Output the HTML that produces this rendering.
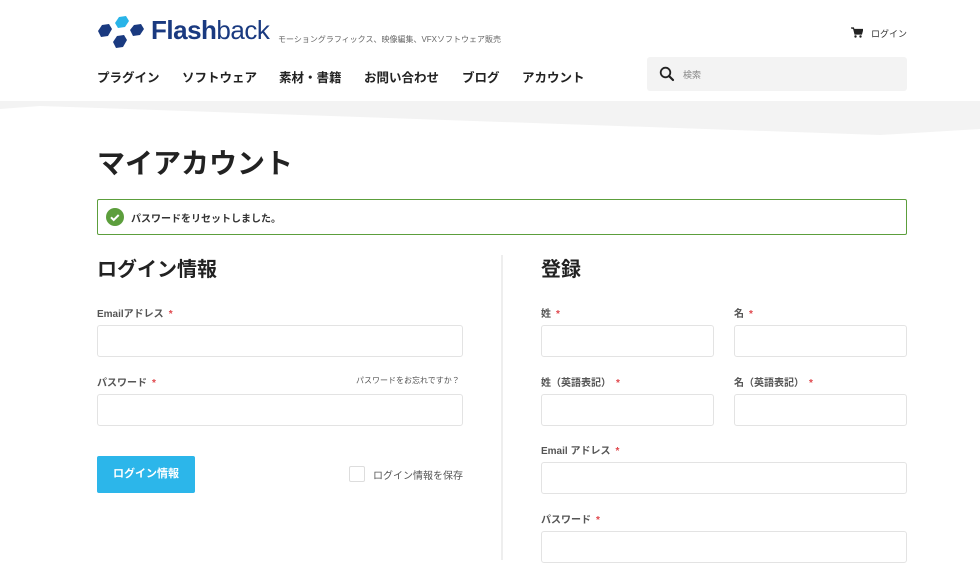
<!DOCTYPE html>
<html><head><meta charset="utf-8"><style>
*{box-sizing:border-box;margin:0;padding:0}
body{width:980px;height:560px;overflow:hidden;background:#fff;font-family:"Liberation Sans","Noto Sans CJK JP",sans-serif;color:#222;position:relative}
.a{position:absolute;white-space:nowrap}
.nav{top:67px;font-size:12.5px;font-weight:bold;color:#222}
.lbl{font-size:10px;font-weight:bold;color:#555}
.lbl i{color:#e0474c;font-style:normal;margin-left:5px}
.in{position:absolute;border:1px solid #e3e3e3;border-radius:3px;background:#fff;height:32px}
h2{position:absolute;font-size:20px;font-weight:bold;color:#222}
</style></head><body>
<svg class="a" style="left:96px;top:14px" width="50" height="36" viewBox="0 0 50 36">
<g fill="#1a3a80">
<polygon points="2,17 6,11 13,10 16,15 12,22 5,23"/>
<polygon points="34,16 38,11 45,10 48,15 44,21 37,22"/>
<polygon points="17,28 21,22 28,21 31,26 27,33 20,34"/>
</g>
<polygon fill="#29b4e8" points="19,9 23,3 30,2 33,7 29,13 22,14"/>
</svg>
<div class="a" style="left:151px;top:15px;font-size:26px;color:#1a3a80;letter-spacing:-0.5px"><b>Flash</b>back</div>
<div class="a" style="left:278px;top:34px;font-size:8px;color:#666">モーショングラフィックス、映像編集、VFXソフトウェア販売</div>
<svg class="a" style="left:851px;top:27px" width="12" height="11" viewBox="0 0 12 11"><path d="M0 1h2.5l1.5 6h6.5l1.2-4.5H3" fill="#222" stroke="#222" stroke-width="1.2"/><circle cx="4.5" cy="9.5" r="1.2" fill="#222"/><circle cx="9.5" cy="9.5" r="1.2" fill="#222"/></svg>
<div class="a" style="left:871px;top:27px;font-size:9px;color:#333">ログイン</div>
<div class="a nav" style="left:97px">プラグイン</div>
<div class="a nav" style="left:182px">ソフトウェア</div>
<div class="a nav" style="left:279px">素材・書籍</div>
<div class="a nav" style="left:364px">お問い合わせ</div>
<div class="a nav" style="left:462px">ブログ</div>
<div class="a nav" style="left:522px">アカウント</div>
<div class="a" style="left:647px;top:57px;width:260px;height:34px;background:#f3f3f3;border-radius:3px"></div>
<svg class="a" style="left:659px;top:66px" width="16" height="16" viewBox="0 0 16 16"><circle cx="6.5" cy="6.5" r="4.8" fill="none" stroke="#222" stroke-width="1.8"/><line x1="10" y1="10" x2="14" y2="14" stroke="#222" stroke-width="2.2" stroke-linecap="round"/></svg>
<div class="a" style="left:683px;top:68px;font-size:9px;color:#888">検索</div>
<svg class="a" style="left:0;top:100px" width="980" height="40" viewBox="0 0 980 40"><polygon fill="#f3f3f3" points="0,1 980,1 980,29 880,35 40,6 0,9"/></svg>
<div class="a" style="left:97px;top:142px;font-size:28px;font-weight:bold;color:#222">マイアカウント</div>
<div class="a" style="left:97px;top:199px;width:810px;height:36px;border:1px solid #5c9e3c;border-radius:2px"></div>
<svg class="a" style="left:106px;top:208px" width="18" height="18" viewBox="0 0 18 18"><circle cx="9" cy="9" r="9" fill="#5c9e3c"/><path d="M5 9.3l2.7 2.7 5-5" fill="none" stroke="#fff" stroke-width="2"/></svg>
<div class="a" style="left:131px;top:210px;font-size:10px;font-weight:bold;color:#333">パスワードをリセットしました。</div>
<div class="a" style="left:501px;top:255px;width:2px;height:305px;background:#eee"></div>
<h2 style="left:97px;top:253px">ログイン情報</h2>
<div class="a lbl" style="left:97px;top:305px">Emailアドレス<i>*</i></div>
<div class="in" style="left:97px;top:325px;width:366px"></div>
<div class="a lbl" style="left:97px;top:374px">パスワード<i>*</i></div>
<div class="a" style="left:356px;top:375px;font-size:8px;color:#555">パスワードをお忘れですか？</div>
<div class="in" style="left:97px;top:394px;width:366px"></div>
<div class="a" style="left:97px;top:456px;width:98px;height:37px;background:#2cb6ea;border-radius:2px;color:#fff;font-size:11px;font-weight:bold;text-align:center;line-height:37px">ログイン情報</div>
<div class="a" style="left:349px;top:466px;width:16px;height:16px;border:1px solid #ddd;border-radius:2px"></div>
<div class="a" style="left:373px;top:467px;font-size:10px;color:#555">ログイン情報を保存</div>
<h2 style="left:541px;top:253px">登録</h2>
<div class="a lbl" style="left:541px;top:305px">姓<i>*</i></div>
<div class="a lbl" style="left:734px;top:305px">名<i>*</i></div>
<div class="in" style="left:541px;top:325px;width:173px"></div>
<div class="in" style="left:734px;top:325px;width:173px"></div>
<div class="a lbl" style="left:541px;top:374px">姓（英語表記）<i>*</i></div>
<div class="a lbl" style="left:734px;top:374px">名（英語表記）<i>*</i></div>
<div class="in" style="left:541px;top:394px;width:173px"></div>
<div class="in" style="left:734px;top:394px;width:173px"></div>
<div class="a lbl" style="left:541px;top:442px">Email アドレス<i>*</i></div>
<div class="in" style="left:541px;top:462px;width:366px"></div>
<div class="a lbl" style="left:541px;top:511px">パスワード<i>*</i></div>
<div class="in" style="left:541px;top:531px;width:366px"></div>
</body></html>
